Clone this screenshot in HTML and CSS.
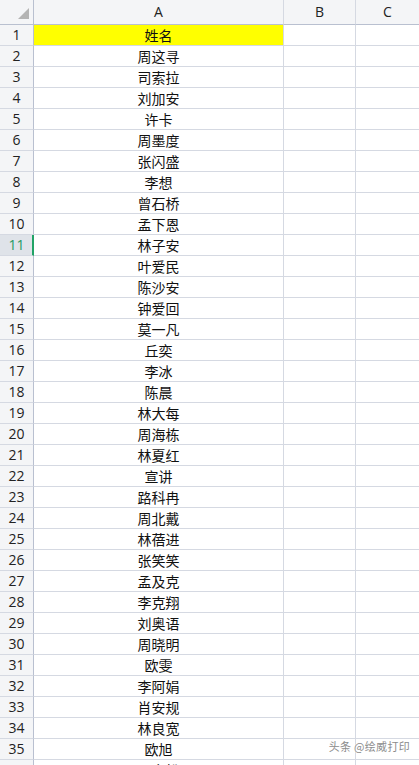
FILE: index.html
```html
<!DOCTYPE html>
<html lang="zh-CN">
<head>
    <meta charset="UTF-8">
    <meta name="viewport" content="width=device-width, initial-scale=1.0">
    <title>姓名表</title>
    <link rel="stylesheet" href="styles.css">
</head>
<body>
    <div class="sheet" id="sheet">
        <div class="corner"><span class="corner-tri"></span></div>
        <div class="col-head">A</div>
        <div class="col-head">B</div>
        <div class="col-head last">C</div>
    </div>
    <div class="watermark">头条 @绘威打印</div>

    <script>
        const names = [
            '姓名', '周这寻', '司索拉', '刘加安', '许卡', '周墨度', '张闪盛', '李想',
            '曾石桥', '孟下恩', '林子安', '叶爱民', '陈沙安', '钟爱回', '莫一凡', '丘奕',
            '李冰', '陈晨', '林大每', '周海栋', '林夏红', '宣讲', '路科冉', '周北戴',
            '林蓓进', '张笑笑', '孟及克', '李克翔', '刘奥语', '周晓明', '欧雯', '李阿娟',
            '肖安规', '林良宽', '欧旭', '周文松'
        ];
        const activeRow = 11; // selected cell row

        const sheet = document.getElementById('sheet');
        names.forEach(function (name, i) {
            const n = i + 1;
            const head = document.createElement('div');
            head.className = 'row-head' + (n === activeRow ? ' active' : '');
            head.textContent = n;
            sheet.appendChild(head);

            const a = document.createElement('div');
            a.className = 'cell name' + (n === 1 ? ' title' : '');
            a.textContent = name;
            sheet.appendChild(a);

            sheet.appendChild(Object.assign(document.createElement('div'), { className: 'cell' }));
            sheet.appendChild(Object.assign(document.createElement('div'), { className: 'cell last' }));
        });
    </script>
</body>
</html>
```

FILE: styles.css
```css
body {
    margin: 0;
    padding: 0;
    background: #fff;
    overflow: hidden;
    font-family: "Noto Sans CJK SC", "Noto Sans", sans-serif;
}
.sheet {
    display: grid;
    grid-template-columns: 34px 250px 72px 1fr;
    grid-template-rows: 25px;
    grid-auto-rows: 21px;
}
.corner,
.col-head,
.row-head,
.cell {
    box-sizing: border-box;
    border-right: 1px solid #d5d9e2;
    border-bottom: 1px solid #d5d9e2;
}
.corner {
    position: relative;
    background: #f4f5f7;
    border-right-color: #b9c0d0;
    border-bottom-color: #b9c0d0;
}
.corner-tri {
    position: absolute;
    left: 18px;
    top: 8px;
    width: 0;
    height: 0;
    border-left: 11px solid transparent;
    border-bottom: 11px solid #b4b4b4;
}
.col-head {
    background: #f4f5f7;
    border-bottom-color: #b9c0d0;
    font-family: "Open Sans", "Noto Sans", sans-serif;
    font-size: 14px;
    color: #222;
    text-align: center;
    line-height: 24px;
}
.row-head {
    background: #f4f5f7;
    border-right-color: #b9c0d0;
    font-family: "Open Sans", "Noto Sans", sans-serif;
    font-size: 14px;
    color: #222;
    text-align: center;
    line-height: 20px;
}
.row-head.active {
    background: #dfe3e9;
    color: #1f9a64;
    border-right: 2px solid #21a366;
    padding-left: 1px;
}
.cell {
    background: #fff;
}
.last {
    border-right: none;
}
.name {
    font-size: 14px;
    color: #111;
    text-align: center;
    line-height: 20px;
}
.name.title {
    background: #ffff00;
}
.watermark {
    position: absolute;
    right: 9px;
    bottom: 11px;
    font-size: 11px;
    color: #8c8c8c;
    text-shadow: 0 0 2px #fff, 0 0 1px #fff;
    letter-spacing: 0.3px;
}
```
